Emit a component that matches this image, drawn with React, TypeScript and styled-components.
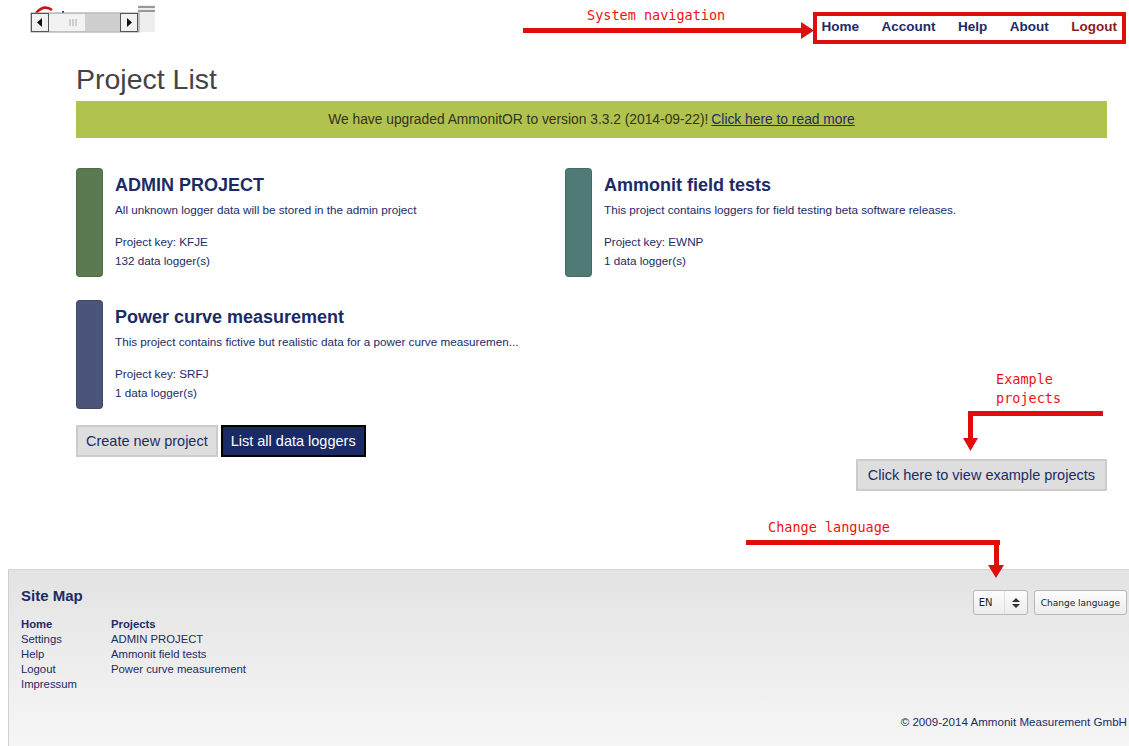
import React from "react";
import styled, { createGlobalStyle } from "styled-components";

const GlobalStyle = createGlobalStyle`
    html, body {
        margin: 0;
        padding: 0;
        background: #ffffff;
        font-family: "Liberation Sans", Arial, Helvetica, sans-serif;
    }
`;

const NAVY = "#1c2b66";

const projects = [
    {
        name: "ADMIN PROJECT",
        text: "All unknown logger data will be stored in the admin project",
        key: "KFJE",
        loggers: 132,
        color: "#5b7a52",
    },
    {
        name: "Ammonit field tests",
        text: "This project contains loggers for field testing beta software releases.",
        key: "EWNP",
        loggers: 1,
        color: "#4f7a75",
    },
    {
        name: "Power curve measurement",
        text: "This project contains fictive but realistic data for a power curve measuremen...",
        key: "SRFJ",
        loggers: 1,
        color: "#4b5479",
    },
];

const Page = styled.div`
    position: relative;
    width: 1129px;
    min-height: 746px;
    overflow: hidden;
`;

const TopBar = styled.div`
    display: flex;
    justify-content: space-between;
    align-items: flex-start;
    height: 48px;
`;

const Widget = styled.div`
    margin: 4px 0 0 30px;
`;

const NavBox = styled.nav`
    display: flex;
    align-items: center;
    margin: 12px 3px 0 0;
    height: 24px;
    box-sizing: content-box;
    padding: 0 5px 3px 5px;
    height: 21px;
    border: 4px solid #e00d0d;
`;

const NavLink = styled.a<{ $logout?: boolean }>`
    font-size: 13.5px;
    line-height: 16px;
    font-weight: bold;
    color: ${(p) => (p.$logout ? "#8e1b1f" : NAVY)};
    text-decoration: none;
    & + & {
        margin-left: 22.5px;
    }
`;

const Main = styled.main`
    padding: 0 22px 0 76px;
`;

const Title = styled.h1`
    margin: 14px 0 0;
    font-size: 28.5px;
    line-height: 34px;
    font-weight: normal;
    color: #444444;
`;

const Banner = styled.div`
    margin-top: 5px;
    height: 37px;
    background: #b1c24e;
    display: flex;
    align-items: center;
    justify-content: center;
    font-size: 13.8px;
    color: #33331f;
    a {
        color: ${NAVY};
        margin-left: 3px;
    }
`;

const Grid = styled.div`
    display: grid;
    grid-template-columns: 489px 1fr;
    row-gap: 23px;
    margin-top: 30px;
`;

const Card = styled.div`
    display: flex;
    height: 109px;
`;

const ColorBar = styled.div<{ $color: string }>`
    width: 27px;
    flex: none;
    border-radius: 4px;
    background: ${(p) => p.$color};
    border: 1px solid rgba(0, 0, 0, 0.12);
    box-sizing: border-box;
`;

const CardBody = styled.div`
    padding: 7px 0 0 12px;
    color: ${NAVY};
`;

const CardTitle = styled.h2`
    margin: 0 0 5px;
    font-size: 18px;
    line-height: 20px;
    font-weight: bold;
`;

const CardText = styled.p`
    margin: 0;
    font-size: 11.7px;
    line-height: 19px;
`;

const Spacer = styled.div`
    height: 13px;
`;

const Actions = styled.div`
    display: flex;
    gap: 3px;
    margin-top: 16px;
`;

const Button = styled.button<{ $dark?: boolean }>`
    font-family: "Liberation Sans", Arial, sans-serif;
    font-size: 14.5px;
    height: 32px;
    padding: 0 8px;
    border: 2px solid ${(p) => (p.$dark ? "#000000" : "#cccccc")};
    background: ${(p) => (p.$dark ? "#1a2a66" : "#dedede")};
    color: ${(p) => (p.$dark ? "#ffffff" : NAVY)};
    cursor: pointer;
`;

const ExampleRow = styled.div`
    display: flex;
    justify-content: flex-end;
    margin-top: 2px;
    button {
        padding: 0 10px;
    }
`;

const Footer = styled.footer`
    margin: 78px 0 0 8px;
    height: 178px;
    box-sizing: border-box;
    padding: 17px 12px 0;
    background: linear-gradient(#e3e3e3, #f6f6f6);
    border-top: 1px solid #d6d6d6;
    border-left: 1px solid #d0d0d0;
    display: flex;
    flex-direction: column;
    color: ${NAVY};
`;

const FooterTop = styled.div`
    display: flex;
    justify-content: space-between;
    align-items: flex-start;
`;

const SiteMapTitle = styled.h3`
    margin: 0;
    font-size: 15px;
    line-height: 18px;
    font-weight: bold;
`;

const SiteMap = styled.div`
    display: flex;
    margin-top: 12px;
`;

const MapColumn = styled.ul`
    list-style: none;
    margin: 0;
    padding: 0;
    min-width: 90px;
    font-size: 11.3px;
    line-height: 15px;
    white-space: nowrap;
    li:first-child {
        font-weight: bold;
    }
`;

const LangForm = styled.div`
    display: flex;
    gap: 6px;
    margin: 3px -10px 0 0;
    font-family: "DejaVu Sans", sans-serif;
    font-size: 9px;
    color: #222222;
`;

const Select = styled.div`
    display: flex;
    align-items: center;
    width: 55px;
    height: 25px;
    box-sizing: border-box;
    border: 1px solid #b8b8b8;
    border-radius: 3px;
    background: linear-gradient(#fdfdfd, #ececec);
    font-size: 10px;
    span {
        flex: 1;
        padding-left: 5px;
    }
    i {
        width: 22px;
        height: 100%;
        border-left: 1px solid #dddddd;
        display: flex;
        align-items: center;
        justify-content: center;
    }
`;

const LangButton = styled.div`
    height: 25px;
    box-sizing: border-box;
    display: flex;
    align-items: center;
    padding: 0 6px;
    border: 1px solid #b8b8b8;
    border-radius: 3px;
    background: linear-gradient(#fdfdfd, #ececec);
`;

const Copyright = styled.div`
    margin: auto -10px 19px 0;
    text-align: right;
    font-size: 11.6px;
`;

const Note = styled.div<{ $x: number; $y: number }>`
    position: absolute;
    left: ${(p) => p.$x}px;
    top: ${(p) => p.$y}px;
    font-family: "DejaVu Sans Mono", monospace;
    font-size: 13.5px;
    line-height: 19px;
    color: #ee1111;
    white-space: pre;
`;

const Overlay = styled.svg`
    position: absolute;
    left: 0;
    top: 0;
    pointer-events: none;
`;

function ScrollWidget() {
    return (
        <svg width="126" height="30" viewBox="0 0 126 30">
            <path d="M6 9 Q14 0 22 6" stroke="#cc1111" strokeWidth="2.5" fill="none" />
            <rect x="32" y="7" width="2" height="3" fill="#2244aa" />
            <rect x="108" y="1" width="17" height="27" fill="#eeeeee" />
            <rect x="108" y="2" width="17" height="2" fill="#999" />
            <rect x="108" y="6" width="17" height="2" fill="#999" />
            <rect x="1" y="9" width="108" height="19" fill="#e4e4e4" stroke="#9a9a9a" />
            <rect x="19" y="10" width="36" height="17" fill="#f2f2f2" />
            <rect x="55" y="10" width="35" height="17" fill="#cfcfcf" />
            <path d="M40 15 v7 M43 15 v7 M46 15 v7" stroke="#aaa" />
            <rect x="1.5" y="9.5" width="17" height="18" fill="#f1f1f1" stroke="#555" />
            <path d="M7 18.5 L12 14 L12 23 Z" fill="#111" />
            <rect x="90.5" y="9.5" width="17" height="18" fill="#f1f1f1" stroke="#555" />
            <path d="M102 18.5 L97 14 L97 23 Z" fill="#111" />
        </svg>
    );
}

function Annotations() {
    return (
        <Overlay width="1129" height="746">
            <g fill="#e00d0d" stroke="none">
                {/* system navigation */}
                <rect x="523" y="28" width="280" height="5" />
                <path d="M801 22 L814 30.5 L801 39 Z" />
                {/* example projects */}
                <rect x="968" y="411" width="135" height="5" />
                <rect x="968" y="411" width="5" height="30" />
                <path d="M963 438 L978 438 L970.5 451 Z" />
                {/* change language */}
                <rect x="746" y="540" width="254" height="5" />
                <rect x="994" y="540" width="5" height="27" />
                <path d="M988 565 L1004 565 L996 578 Z" />
            </g>
        </Overlay>
    );
}

export default function App() {
    return (
        <Page>
            <GlobalStyle />
            <TopBar>
                <Widget>
                    <ScrollWidget />
                </Widget>
                <NavBox>
                    <NavLink href="#">Home</NavLink>
                    <NavLink href="#">Account</NavLink>
                    <NavLink href="#">Help</NavLink>
                    <NavLink href="#">About</NavLink>
                    <NavLink href="#" $logout>
                        Logout
                    </NavLink>
                </NavBox>
            </TopBar>

            <Main>
                <Title>Project List</Title>
                <Banner>
                    We have upgraded AmmonitOR to version 3.3.2 (2014-09-22)!
                    <a href="#">Click here to read more</a>
                </Banner>

                <Grid>
                    {projects.map((p) => (
                        <Card key={p.key}>
                            <ColorBar $color={p.color} />
                            <CardBody>
                                <CardTitle>{p.name}</CardTitle>
                                <CardText>{p.text}</CardText>
                                <Spacer />
                                <CardText>Project key: {p.key}</CardText>
                                <CardText>{p.loggers} data logger(s)</CardText>
                            </CardBody>
                        </Card>
                    ))}
                </Grid>

                <Actions>
                    <Button>Create new project</Button>
                    <Button $dark>List all data loggers</Button>
                </Actions>

                <ExampleRow>
                    <Button>Click here to view example projects</Button>
                </ExampleRow>
            </Main>

            <Footer>
                <FooterTop>
                    <div>
                        <SiteMapTitle>Site Map</SiteMapTitle>
                        <SiteMap>
                            <MapColumn>
                                <li>Home</li>
                                <li>Settings</li>
                                <li>Help</li>
                                <li>Logout</li>
                                <li>Impressum</li>
                            </MapColumn>
                            <MapColumn>
                                <li>Projects</li>
                                <li>ADMIN PROJECT</li>
                                <li>Ammonit field tests</li>
                                <li>Power curve measurement</li>
                            </MapColumn>
                        </SiteMap>
                    </div>
                    <LangForm>
                        <Select>
                            <span>EN</span>
                            <i>
                                <svg width="8" height="12" viewBox="0 0 8 12">
                                    <path d="M0 5 L4 1 L8 5 Z M0 7 L4 11 L8 7 Z" fill="#333" />
                                </svg>
                            </i>
                        </Select>
                        <LangButton>Change language</LangButton>
                    </LangForm>
                </FooterTop>
                <Copyright>© 2009-2014 Ammonit Measurement GmbH</Copyright>
            </Footer>

            <Annotations />
            <Note $x={587} $y={6}>System navigation</Note>
            <Note $x={996} $y={370}>{"Example\nprojects"}</Note>
            <Note $x={768} $y={518}>Change language</Note>
        </Page>
    );
}
